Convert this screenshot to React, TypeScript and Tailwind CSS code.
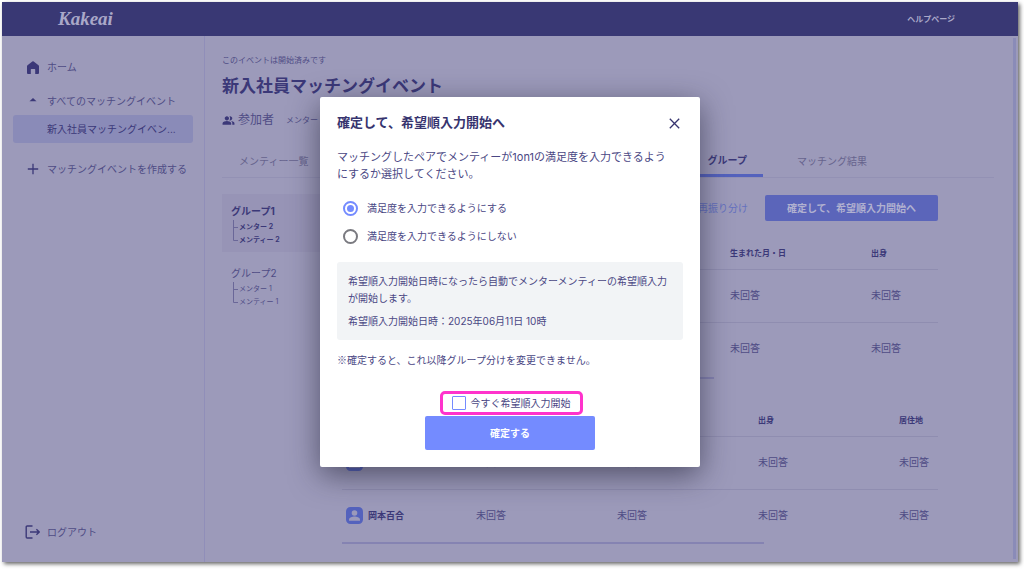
import { FC, ReactNode } from "react";

const Avatar: FC = () => (
  <svg viewBox="0 0 17 17" className="size-[17px] shrink-0">
    <rect width="17" height="17" rx="4.5" fill="#5462bd" />
    <circle cx="8.5" cy="6" r="2.8" fill="#9c9aba" />
    <path d="M3 13.8v-1.2c0-2 3.4-3 5.5-3s5.5 1 5.5 3v1.2z" fill="#9c9aba" />
  </svg>
);

const HomeIcon: FC = () => (
  <svg viewBox="0 0 12 13" className="h-[13px] w-3" fill="#3b3878">
    <path d="M0 5.2Q0 4.6.5 4.2L5.3.4Q6 0 6.7.4l4.8 3.8q.5.4.5 1V12q0 1-1 1H8.2V8.6q0-.6-.6-.6H4.4q-.6 0-.6.6V13H1q-1 0-1-1z" />
  </svg>
);

const CaretIcon: FC = () => (
  <svg viewBox="0 0 12 12" className="size-3" fill="#3b3878">
    <path d="M2.500 6.300 6 2.900l3.500 3.400z" />
  </svg>
);

const PlusIcon: FC = () => (
  <svg viewBox="0 0 12 12" className="size-3" stroke="#3b3878" strokeWidth="1.3">
    <path d="M6 .8v10.400M.8 6h10.400" />
  </svg>
);

const LogoutIcon: FC = () => (
  <svg
    viewBox="0 0 16 14"
    className="h-[14px] w-4"
    fill="none"
    stroke="#3b3878"
    strokeWidth="1.4"
    strokeLinejoin="round"
  >
    <path d="M7.5 1H2.2Q1.2 1 1.2 2v10q0 1 1 1h5.3M5 7h9.3M11.4 4.2 14.3 7l-2.9 2.8" />
  </svg>
);

const PeopleIcon: FC = () => (
  <svg viewBox="0 0 24 24" className="size-[13px] shrink-0" fill="#3b3878">
    <path d="M16.7 13.1c1.4.9 2.3 2.2 2.3 3.9v3h4v-3c0-2.2-3.6-3.5-6.3-3.9zM15 12c2.2 0 4-1.8 4-4s-1.8-4-4-4c-.5 0-.9.1-1.3.2C14.5 5.3 15 6.6 15 8s-.5 2.7-1.3 3.8c.4.1.8.2 1.3.2zM9 12c2.2 0 4-1.8 4-4s-1.8-4-4-4-4 1.8-4 4 1.8 4 4 4zm0 1c-2.7 0-8 1.3-8 4v3h16v-3c0-2.7-5.3-4-8-4z" />
  </svg>
);

type NavItemProps = { icon?: ReactNode; active?: boolean; children: ReactNode };

const NavItem: FC<NavItemProps> = ({ icon, active, children }) => (
  <a
    href="#"
    className={
      active
        ? "flex h-7 items-center rounded-[3px] bg-[#8a8bb8] text-[#3b3878]"
        : "flex h-7 items-center"
    }
  >
    <span className="flex w-[34px] justify-center pl-[6px]">{icon}</span>
    <span className="whitespace-nowrap">{children}</span>
  </a>
);

type GroupProps = { name: string; count: number; active?: boolean };

const Group: FC<GroupProps> = ({ name, count, active }) => (
  <li
    className={
      active
        ? "h-[58px] bg-[#9794b6] px-[9px] pt-[9px] font-bold text-[#3b3878]"
        : "h-[58px] px-[9px] pt-[9px]"
    }
  >
    <p className="text-[10px] leading-4">{name}</p>
    <div className="mt-px ml-[2px] flex text-[7px] leading-[13px]">
      <svg viewBox="0 0 6 22" className="h-[22px] w-[6px]" fill="none" stroke="#6a6798">
        <path d="M.5 0v20.5H5M.5 7.5H5" />
      </svg>
      <div>
        <p>メンター {count}</p>
        <p>メンティー {count}</p>
      </div>
    </div>
  </li>
);

type MemberTableProps = { columns: string[]; names: string[]; nameWidth: string };

const MemberTable: FC<MemberTableProps> = ({ columns, names, nameWidth }) => (
  <table className="w-full table-fixed text-left">
    <colgroup>
      <col className={nameWidth} />
      {columns.map((_, i) => (
        <col key={i} className={i < columns.length - 1 ? "w-[141px]" : ""} />
      ))}
    </colgroup>
    <thead>
      <tr className="h-8 border-b border-[#8f8db0] text-[8px] text-[#3b3878]">
        <th />
        {columns.map((column, i) => (
          <th key={i} className="pl-1 whitespace-nowrap">
            {column}
          </th>
        ))}
      </tr>
    </thead>
    <tbody>
      {names.map((name, row) => (
        <tr key={row} className="h-[53px] border-b border-[#8f8db0] last:border-0">
          <td className="px-1">
            <div className="flex items-center gap-[5px] text-[9px] font-bold text-[#3b3878]">
              <Avatar />
              {name}
            </div>
          </td>
          {columns.map((column, i) => (
            <td key={i} className="pl-1 text-[10px] whitespace-nowrap">
              {column && "未回答"}
            </td>
          ))}
        </tr>
      ))}
    </tbody>
  </table>
);

const Sidebar: FC = () => (
  <nav className="flex w-[203px] shrink-0 flex-col border-r border-[#908eb9] px-[11px] pt-[17px] pb-4 text-[10px]">
    <NavItem icon={<HomeIcon />}>ホーム</NavItem>
    <div className="mt-[6px] mb-3">
      <NavItem icon={<CaretIcon />}>すべてのマッチングイベント</NavItem>
      <NavItem active>新入社員マッチングイベン...</NavItem>
    </div>
    <NavItem icon={<PlusIcon />}>マッチングイベントを作成する</NavItem>
    <div className="mt-auto">
      <NavItem icon={<LogoutIcon />}>ログアウト</NavItem>
    </div>
  </nav>
);

const EventPage: FC = () => (
  <main className="min-w-0 flex-1 pt-4 pr-[19px] pl-[17px]">
    <p className="text-[8px] leading-4">このイベントは開始済みです</p>
    <h1 className="mt-[6px] text-[17px] leading-6 font-bold text-[#3b3878]">
      新入社員マッチングイベント
    </h1>
    <div className="mt-3 flex h-5 items-center">
      <PeopleIcon />
      <span className="ml-[3px] text-[12px]">参加者</span>
      <span className="ml-3 text-[8px]">メンター</span>
    </div>

    <div className="mt-4 flex h-8 border-b border-[#9391b4] text-[10px] text-[#66638d]">
      <button className="px-[17px]">メンティー一覧</button>
      <button className="ml-auto border-b-3 border-[#5462bd] px-4 font-bold text-[#3b3878]">
        グループ
      </button>
      <button className="mr-[93px] px-[34px]">マッチング結果</button>
    </div>

    <div className="mt-4 flex pr-[56px]">
      <ul className="w-[120px] shrink-0 space-y-1">
        <Group name="グループ1" count={2} active />
        <Group name="グループ2" count={1} />
      </ul>
      <div className="min-w-0 flex-1 pt-px">
        <div className="mb-4 flex items-center justify-end gap-[17px] text-[10px]">
          <button className="text-[#6470bf]">再振り分け</button>
          <button className="h-[26px] w-[173px] rounded-[2px] bg-[#5b65ba] font-bold text-[#b1b1d0]">
            確定して、希望順入力開始へ
          </button>
        </div>
        <MemberTable
          nameWidth="w-[102px]"
          columns={["", "", "生まれた月・日", "出身"]}
          names={["", ""]}
        />
        <div className="mt-[2px] mb-[25px] h-[2px] w-[372px] bg-[#8583b2]" />
        <MemberTable
          nameWidth="w-[130px]"
          columns={["部署", "趣味", "出身", "居住地"]}
          names={["", "岡本百合"]}
        />
        <div className="h-[2px] w-[422px] bg-[#8583b2]" />
      </div>
    </div>
  </main>
);

const Radio: FC<{ defaultChecked?: boolean; children: ReactNode }> = ({
  defaultChecked,
  children,
}) => (
  <label className="flex h-7 items-center gap-[9px]">
    <input
      type="radio"
      name="satisfaction"
      defaultChecked={defaultChecked}
      className="size-[15px] appearance-none rounded-full border-2 border-[#7a7a80] bg-clip-content p-[2px] checked:border-[#748bff] checked:bg-[#748bff]"
    />
    {children}
  </label>
);

const ConfirmDialog: FC = () => (
  <div
    role="dialog"
    aria-labelledby="dialog-title"
    className="w-[380px] rounded-[2px] bg-white px-[17px] pt-4 pb-[17px] text-[#4a4784] shadow-[0_8px_30px_rgba(30,30,50,0.6)]"
  >
    <div className="flex h-5 items-center justify-between text-[#37346f]">
      <h2 id="dialog-title" className="text-[13px] font-bold">
        確定して、希望順入力開始へ
      </h2>
      <button aria-label="閉じる" className="mr-[3px]">
        <svg viewBox="0 0 11 11" className="size-[11px]" stroke="currentColor" strokeWidth="1.3">
          <path d="m.8.8 9.4 9.4M10.2.8.8 10.2" />
        </svg>
      </button>
    </div>

    <p className="mt-4 pr-2 text-[11px] leading-[17px]">
      マッチングしたペアでメンティーが1on1の満足度を入力できるようにするか選択してください。
    </p>

    <div className="mt-[11px] pl-[6px] text-[10px]">
      <Radio defaultChecked>満足度を入力できるようにする</Radio>
      <Radio>満足度を入力できるようにしない</Radio>
    </div>

    <div className="mt-3 space-y-[6px] rounded-[3px] bg-[#f2f4f6] px-[11px] pt-[11px] pb-[10px] text-[10px] leading-[17px]">
      <p>希望順入力開始日時になったら自動でメンターメンティーの希望順入力が開始します。</p>
      <p>希望順入力開始日時：2025年06月11日 10時</p>
    </div>

    <p className="mt-[11px] font-['Noto_Sans_CJK_JP',sans-serif] text-[10px] leading-[17px]">
      ※確定すると、これ以降グループ分けを変更できません。
    </p>

    <div className="mt-[23px] flex flex-col items-center">
      <label className="ml-[2px] flex h-6 w-[143px] items-center gap-[5px] rounded-[5px] border-3 border-[#ff33cc] pl-[9px] text-[10px] whitespace-nowrap">
        <input
          type="checkbox"
          className="size-[14px] appearance-none rounded-[1px] border border-[#748bff] checked:bg-[#748bff]"
        />
        今すぐ希望順入力開始
      </label>
      <button className="mt-px h-[34px] w-[170px] rounded-[2px] bg-[#748bff] text-[10px] font-bold text-white">
        確定する
      </button>
    </div>
  </div>
);

const App: FC = () => {
  return (
    <div className="flex min-h-screen bg-white pt-[2px] pr-[6px] pb-[7px] pl-[2px] font-['Inter','Noto_Sans_CJK_JP',sans-serif] text-[#4f4c85]">
      <div className="relative flex flex-1 flex-col bg-[#9c9aba] shadow-[2px_2px_4px_rgba(0,0,0,0.6)]">
        <header className="flex h-[34px] items-center justify-between bg-[#393874] pr-[63px] pl-14 text-[#aaa8c8]">
          <span className="font-['Liberation_Serif',serif] text-[19px] font-bold italic">
            Kakeai
          </span>
          <a href="#" className="text-[8px] font-bold">
            ヘルプページ
          </a>
        </header>
        <div className="flex flex-1">
          <Sidebar />
          <EventPage />
          <div className="mt-[2px] mr-[2px] mb-[3px] w-[3px] bg-[#8a8bb8]" />
        </div>

        <div className="absolute inset-0 flex items-center justify-center">
          <ConfirmDialog />
        </div>
      </div>
    </div>
  );
};

export default App;
